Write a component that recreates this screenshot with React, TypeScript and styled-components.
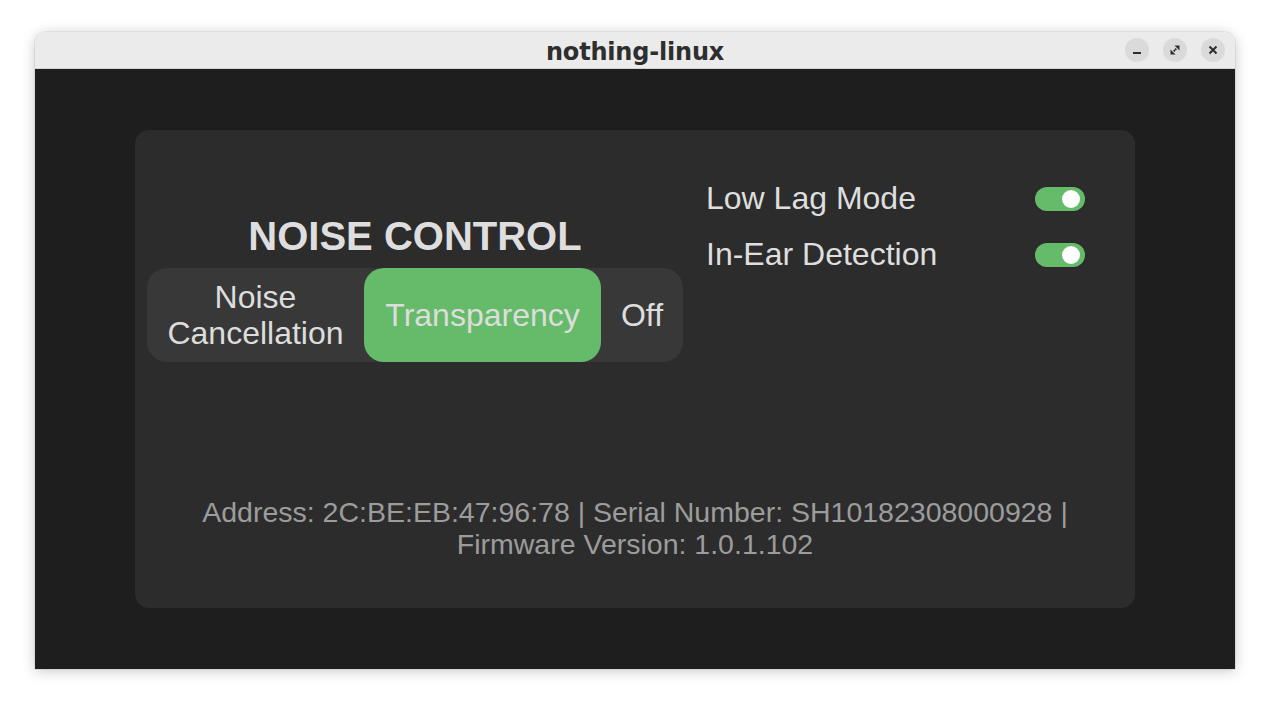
import React, { useState } from 'react';
import styled, { createGlobalStyle } from 'styled-components';

const GlobalStyle = createGlobalStyle`
  html, body {
    margin: 0;
    padding: 0;
    background: #ffffff;
  }
  * {
    box-sizing: border-box;
  }
`;

const Page = styled.div`
  width: 1270px;
  height: 707px;
  padding: 32px 35px 38px;
`;

const Window = styled.div`
  width: 1200px;
  height: 637px;
  display: flex;
  flex-direction: column;
  border-radius: 12px 12px 0 0;
  overflow: hidden;
  box-shadow: 0 2px 14px rgba(0, 0, 0, 0.22), 0 0 0 1px rgba(0, 0, 0, 0.06);
`;

const TitleBar = styled.header`
  position: relative;
  height: 37px;
  flex: none;
  display: flex;
  align-items: center;
  justify-content: center;
  background: #ebebeb;
  border-bottom: 1px solid #d2d2d2;
`;

const Title = styled.h1`
  margin: 3px 0 0;
  font-family: "DejaVu Sans", "Noto Sans", sans-serif;
  font-weight: bold;
  font-size: 24px;
  color: #2e2e2e;
  letter-spacing: -0.2px;
`;

const Controls = styled.div`
  position: absolute;
  right: 10px;
  top: 6px;
  display: flex;
  gap: 14px;
`;

const ControlButton = styled.button`
  width: 24px;
  height: 24px;
  padding: 0;
  border: none;
  border-radius: 50%;
  background: #dadada;
  color: #2e2e2e;
  display: flex;
  align-items: center;
  justify-content: center;
`;

const Content = styled.main`
  flex: 1;
  background: #1e1e1e;
  display: flex;
  align-items: center;
  justify-content: center;
`;

const Card = styled.section`
  width: 1000px;
  height: 478px;
  background: #2c2c2c;
  border-radius: 14px;
  display: flex;
  flex-direction: column;
  padding: 50px 0 48px;
  font-family: "Liberation Sans", Arial, sans-serif;
`;

const TopRow = styled.div`
  display: flex;
  align-items: flex-start;
  padding: 0 50px 0 12px;
  gap: 23px;
`;

const NoiseColumn = styled.div`
  width: 536px;
  margin-top: 33px;
  display: flex;
  flex-direction: column;
  align-items: center;
  gap: 9px;
`;

const Heading = styled.h2`
  margin: 0;
  font-size: 40px;
  line-height: 46px;
  font-weight: bold;
  color: #dedede;
`;

const Segmented = styled.div`
  width: 536px;
  height: 94px;
  display: flex;
  background: #383838;
  border-radius: 20px;
`;

const SegmentButton = styled.button<{ $active?: boolean; $width: number }>`
  flex: none;
  width: ${({ $width }) => $width}px;
  border: none;
  padding: 0;
  border-radius: 20px;
  font-family: inherit;
  font-size: 32px;
  line-height: 36px;
  color: #dddddd;
  background: ${({ $active }) => ($active ? '#66bb6a' : 'transparent')};
  display: flex;
  align-items: center;
  justify-content: center;
  text-align: center;
  cursor: pointer;
`;

const SettingsColumn = styled.div`
  flex: 1;
  display: flex;
  flex-direction: column;
  gap: 19px;
`;

const SettingRow = styled.div`
  display: flex;
  align-items: center;
  justify-content: space-between;
  height: 37px;
`;

const SettingLabel = styled.span`
  font-size: 32px;
  line-height: 37px;
  color: #dedede;
`;

const Toggle = styled.button<{ $on: boolean }>`
  position: relative;
  width: 50px;
  height: 24px;
  padding: 0;
  border: none;
  border-radius: 12px;
  background: ${({ $on }) => ($on ? '#66bb6a' : '#555555')};
  cursor: pointer;

  &::after {
    content: '';
    position: absolute;
    top: 3px;
    left: ${({ $on }) => ($on ? '27px' : '5px')};
    width: 18px;
    height: 18px;
    border-radius: 50%;
    background: #ffffff;
  }
`;

const Footer = styled.p`
  margin: auto 0 0;
  text-align: center;
  font-size: 28.5px;
  line-height: 32px;
  color: #9c9c9c;
`;

const modes = [
  { name: 'Noise Cancellation', width: 217 },
  { name: 'Transparency', width: 237 },
  { name: 'Off', width: 82 },
];

export default function App() {
  const [mode, setMode] = useState('Transparency');
  const [lowLag, setLowLag] = useState(true);
  const [inEar, setInEar] = useState(true);

  return (
    <Page>
      <GlobalStyle />
      <Window>
        <TitleBar>
          <Title>nothing-linux</Title>
          <Controls>
            <ControlButton aria-label="Minimize">
              <svg width="16" height="16" viewBox="0 0 16 16">
                <rect x="4" y="10" width="8" height="2" fill="currentColor" />
              </svg>
            </ControlButton>
            <ControlButton aria-label="Maximize">
              <svg width="16" height="16" viewBox="0 0 16 16" fill="currentColor">
                <path d="M7.5 3.5h5v5z" />
                <path d="M3.5 7.5v5h5z" />
                <path d="M8.6 6l1.4 1.4-1.2 1.2-1.4-1.4z" />
                <path d="M7.2 7.4l1.4 1.4-1.2 1.2-1.4-1.4z" />
              </svg>
            </ControlButton>
            <ControlButton aria-label="Close">
              <svg width="16" height="16" viewBox="0 0 16 16">
                <path d="M4.5 4.5l7 7M11.5 4.5l-7 7" stroke="currentColor" strokeWidth="2" />
              </svg>
            </ControlButton>
          </Controls>
        </TitleBar>
        <Content>
          <Card>
            <TopRow>
              <NoiseColumn>
                <Heading>NOISE CONTROL</Heading>
                <Segmented>
                  {modes.map((m) => (
                    <SegmentButton
                      key={m.name}
                      $width={m.width}
                      $active={mode === m.name}
                      onClick={() => setMode(m.name)}
                    >
                      {m.name === 'Noise Cancellation' ? (
                        <span>
                          Noise
                          <br />
                          Cancellation
                        </span>
                      ) : (
                        m.name
                      )}
                    </SegmentButton>
                  ))}
                </Segmented>
              </NoiseColumn>
              <SettingsColumn>
                <SettingRow>
                  <SettingLabel>Low Lag Mode</SettingLabel>
                  <Toggle $on={lowLag} onClick={() => setLowLag(!lowLag)} />
                </SettingRow>
                <SettingRow>
                  <SettingLabel>In-Ear Detection</SettingLabel>
                  <Toggle $on={inEar} onClick={() => setInEar(!inEar)} />
                </SettingRow>
              </SettingsColumn>
            </TopRow>
            <Footer>
              Address: 2C:BE:EB:47:96:78 | Serial Number: SH10182308000928 |
              <br />
              Firmware Version: 1.0.1.102
            </Footer>
          </Card>
        </Content>
      </Window>
    </Page>
  );
}
